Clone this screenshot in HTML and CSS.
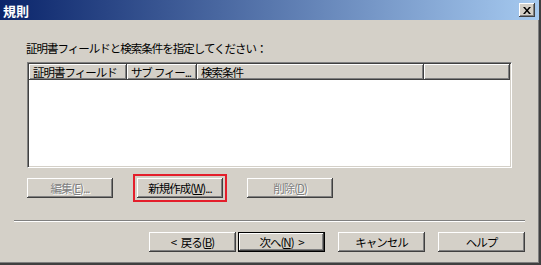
FILE: index.html
```html
<!DOCTYPE html>
<html lang="ja">
<head>
    <meta charset="UTF-8">
    <title>規則</title>
    <link rel="stylesheet" href="styles.css">
</head>
<body>
    <div class="window">
        <div class="titlebar">
            <span class="title">規則</span>
            <button class="close" aria-label="閉じる">
                <svg width="8" height="7" viewBox="0 0 8 7">
                    <path d="M0 0h2l2 2.5L6 0h2L5 3.5 8 7H6L4 4.5 2 7H0l3-3.5z" fill="#000"/>
                </svg>
            </button>
        </div>

        <div class="content">
            <p class="label">証明書フィールドと検索条件を指定してください：</p>

            <div class="list">
                <div class="list-header">
                    <div class="col col-field">証明書フィールド</div>
                    <div class="col col-sub">サブ フィー...</div>
                    <div class="col col-cond">検索条件</div>
                    <div class="col col-rest"></div>
                </div>
            </div>

            <div class="row-actions">
                <button class="btn" disabled>編集(<u>E</u>)...</button>
                <button class="btn focused">新規作成(<u>W</u>)...</button>
                <button class="btn" disabled>削除(<u>D</u>)</button>
            </div>

            <div class="separator"></div>

            <div class="row-nav">
                <button class="btn">&lt; 戻る(<u>B</u>)</button>
                <button class="btn default">次へ(<u>N</u>) &gt;</button>
                <button class="btn spaced">キャンセル</button>
                <button class="btn spaced">ヘルプ</button>
            </div>
        </div>
    </div>
</body>
</html>
```

FILE: styles.css
```css
body {
    margin: 0;
    font-family: "Noto Sans CJK JP", "Liberation Sans", sans-serif;
    font-size: 11.5px;
    letter-spacing: -1px;
    word-spacing: 3px;
    background: #d4d0c8;
}
.window {
    width: 541px;
    height: 265px;
    box-sizing: border-box;
    background: #d4d0c8;
    border-right: 2px solid #404040;
    border-bottom: 2px solid #404040;
    box-shadow: inset -1px -1px #808080;
    overflow: hidden;
}
.titlebar {
    height: 20px;
    display: flex;
    align-items: center;
    justify-content: space-between;
    padding: 0 4px 0 3px;
    background: linear-gradient(to right, #0a246a, #a6caf0);
}
.title {
    color: #fff;
    font-weight: bold;
    font-size: 13px;
    letter-spacing: 0;
}
.close {
    width: 16px;
    height: 14px;
    padding: 0;
    border: none;
    background: #d4d0c8;
    display: flex;
    align-items: center;
    justify-content: center;
    box-shadow: inset -1px -1px #404040, inset 1px 1px #fff, inset -2px -2px #808080;
}
.content {
    padding: 21px 0 0 14px;
}
.label {
    margin: 0 0 0 12px;
    line-height: 14px;
    height: 14px;
}
.list {
    margin: 7px 0 0 13px;
    width: 485px;
    height: 106px;
    box-sizing: border-box;
    background: #fff;
    border-top: 1px solid #808080;
    border-left: 1px solid #808080;
    border-right: 1px solid #fff;
    border-bottom: 1px solid #fff;
    box-shadow: inset 1px 1px #404040, inset -1px -1px #d4d0c8;
    padding: 1px;
}
.list-header {
    display: flex;
    height: 16px;
}
.col {
    box-sizing: border-box;
    background: #d4d0c8;
    padding-left: 4px;
    line-height: 16px;
    white-space: nowrap;
    overflow: hidden;
    box-shadow: inset -1px -1px #404040, inset 1px 1px #fff, inset -2px -2px #808080;
}
.col-field { width: 98px; }
.col-sub {
    width: 70px;
    word-spacing: 1px;
    letter-spacing: -1.2px;
}
.col-cond { width: 227px; }
.col-rest { flex: 1; }
.row-actions {
    display: flex;
    gap: 24px;
    margin: 10px 0 0 13px;
}
.btn {
    width: 86px;
    height: 20px;
    padding: 0;
    border: none;
    background: #d4d0c8;
    font-family: inherit;
    font-size: 11.5px;
    letter-spacing: -1px;
    word-spacing: 3px;
    color: #000;
    box-shadow: inset -1px -1px #404040, inset 1px 1px #fff, inset -2px -2px #808080;
}
.btn:disabled {
    color: #808080;
    text-shadow: 1px 1px #fff;
}
.btn.focused {
    outline: 2px solid #e41e2b;
    outline-offset: 2px;
}
.btn.default {
    width: 87px;
    border: 1px solid #000;
}
.separator {
    margin: 22px 14px 0 0;
    height: 1px;
    border-top: 1px solid #808080;
    background: #fff;
}
.row-nav {
    display: flex;
    justify-content: flex-end;
    gap: 2px;
    margin: 10px 14px 0 0;
}
.row-nav .btn {
    width: 87px;
}
.row-nav .spaced {
    margin-left: 11px;
}
```
